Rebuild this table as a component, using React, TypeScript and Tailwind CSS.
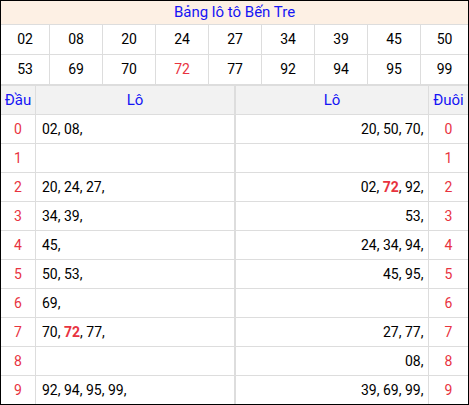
const heads = [
	"02", "08", "20", "24", "27", "34", "39", "45", "50",
	"53", "69", "70", "72", "77", "92", "94", "95", "99",
];

const rows: { dau: string[]; duoi: string[] }[] = [
	{ dau: ["02", "08"], duoi: ["20", "50", "70"] },
	{ dau: [], duoi: [] },
	{ dau: ["20", "24", "27"], duoi: ["02", "72", "92"] },
	{ dau: ["34", "39"], duoi: ["53"] },
	{ dau: ["45"], duoi: ["24", "34", "94"] },
	{ dau: ["50", "53"], duoi: ["45", "95"] },
	{ dau: ["69"], duoi: [] },
	{ dau: ["70", "72", "77"], duoi: ["27", "77"] },
	{ dau: [], duoi: ["08"] },
	{ dau: ["92", "94", "95", "99"], duoi: ["39", "69", "99"] },
];

const Nums = ({ list }: { list: string[] }) => (
	<>
		{list.map((n) => (
			<span key={n}>
				{n === "72" ? <b className="font-bold text-[#e8333f]">{n}</b> : n},{" "}
			</span>
		))}
	</>
);

export default function App() {
	return (
		<div className="w-[469px] border border-black bg-white font-['Roboto',sans-serif] text-[14px] text-black">
			<div className="h-[24px] border-b border-[#dddddd] bg-[#fdf0e4] text-center text-[15px] leading-[23px] text-[#1515f5]">
				Bảng lô tô Bến Tre
			</div>
			<div className="grid grid-cols-[49px_repeat(7,53px)_1fr]">
				{heads.map((n, i) => (
					<div
						key={i}
						className={`flex h-[30px] items-center justify-center border-b border-[#dddddd] ${i % 9 === 8 ? "" : "border-r"} ${n === "72" ? "text-[#e8333f]" : ""}`}
					>
						{n}
					</div>
				))}
			</div>
			<div className="border-t border-[#dddddd]">
				<div className="grid h-[29px] grid-cols-[35px_200px_193px_1fr] border-b border-[#dddddd] bg-[#f2f2f2] text-[15px] text-[#1515f5]">
					<div className="flex items-center justify-center border-r border-[#dddddd] whitespace-nowrap">Đầu</div>
					<div className="flex items-center justify-center border-r-2 border-[#dddddd]">Lô</div>
					<div className="flex items-center justify-center border-r border-[#dddddd]">Lô</div>
					<div className="flex items-center justify-center whitespace-nowrap">Đuôi</div>
				</div>
				{rows.map((r, i) => (
					<div
						key={i}
						className={`grid grid-cols-[35px_200px_193px_1fr] ${i === 9 ? "h-[28px]" : "h-[29px] border-b border-[#dddddd]"}`}
					>
						<div className="flex items-center justify-center border-r border-[#dddddd] text-[#e8333f]">{i}</div>
						<div className="flex items-center border-r-2 border-[#dddddd] pl-[6px] whitespace-pre">
							<Nums list={r.dau} />
						</div>
						<div className="flex items-center justify-end border-r border-[#dddddd] pr-[1px] whitespace-pre">
							<Nums list={r.duoi} />
						</div>
						<div className="flex items-center justify-center text-[#e8333f]">{i}</div>
					</div>
				))}
			</div>
		</div>
	);
}
